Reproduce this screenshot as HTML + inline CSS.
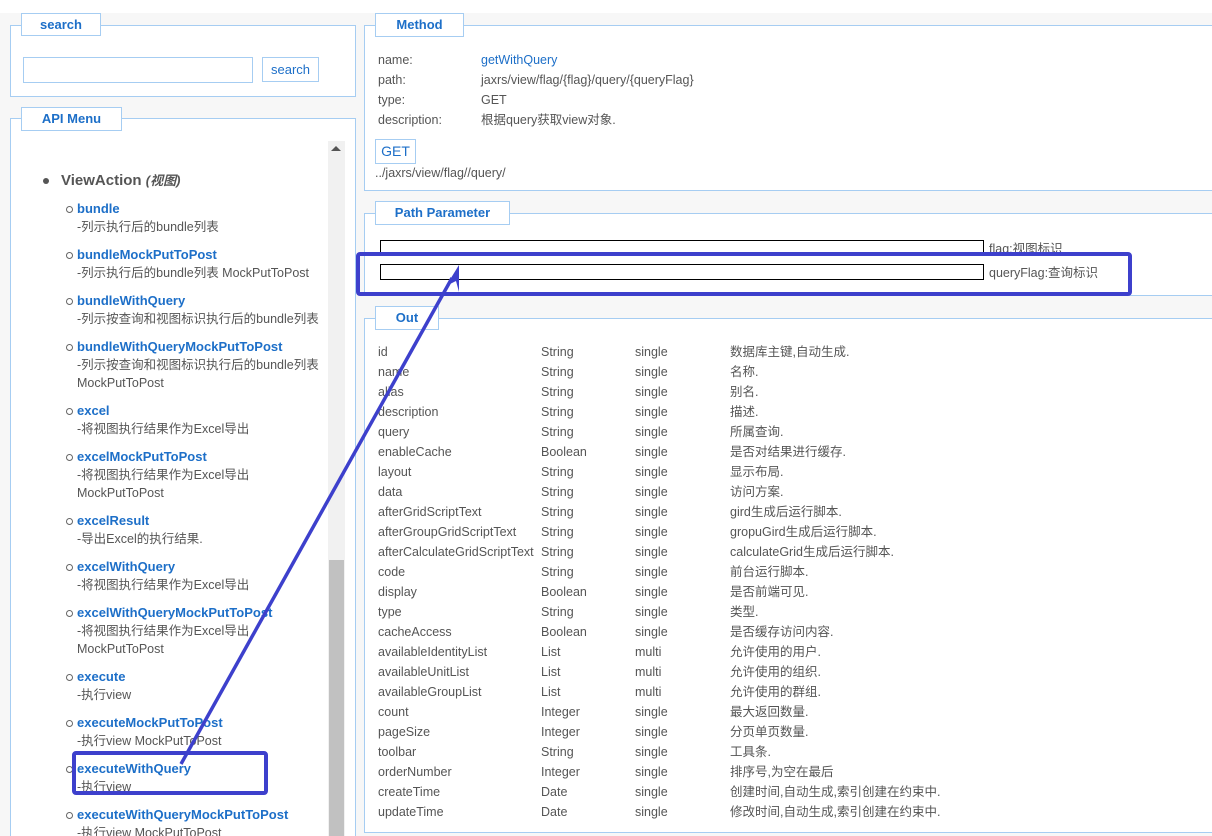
<!DOCTYPE html>
<html><head><meta charset="utf-8"><style>
*{margin:0;padding:0;box-sizing:border-box}
html,body{overflow:hidden;height:836px}
body{width:1212px;height:836px;background:#f7f7f7;font-family:"Liberation Sans","Noto Sans CJK SC",sans-serif;font-size:12.5px;color:#555;position:relative}
.a{position:absolute}
.panel{position:absolute;background:#fff;border:1px solid #a6cdf2}
.leg{position:absolute;background:#fff;border:1px solid #a6cdf2;color:#1d6fc8;font-weight:bold;font-size:13px;text-align:center;line-height:21px}
.lnk{color:#1d6fc8;font-weight:bold;font-size:13px}
.item{position:absolute;left:77px;line-height:18px;font-size:12.5px;width:250px}
.item:before{content:"";position:absolute;left:-11px;top:6px;width:5px;height:5px;border:1px solid #666;border-radius:50%}
.row{position:absolute;left:378px;height:20px;line-height:20px;font-size:12.5px;white-space:nowrap}
.row span{position:absolute}
</style></head><body>
<div class="a" style="left:0;top:0;width:1212px;height:13px;background:#fff"></div>
<!-- search -->
<div class="panel" style="left:10px;top:25px;width:346px;height:72px"></div>
<div class="leg" style="left:21px;top:13px;width:80px;height:23px">search</div>
<div class="a" style="left:23px;top:57px;width:230px;height:26px;border:1px solid #a6cdf2;background:#fff"></div>
<div class="a" style="left:262px;top:57px;width:57px;height:25px;border:1px solid #a6cdf2;color:#1d6fc8;font-size:13px;text-align:center;line-height:23px">search</div>
<!-- API menu -->
<div class="panel" style="left:10px;top:118px;width:346px;height:718px;border-bottom:none"></div>
<div class="leg" style="left:21px;top:107px;width:101px;height:24px">API Menu</div>
<div class="a" style="left:328px;top:141px;width:17px;height:695px;background:#f1f1f1"></div>
<div class="a" style="left:331px;top:146px;width:0;height:0;border-left:5px solid transparent;border-right:5px solid transparent;border-bottom:5px solid #555"></div>
<div class="a" style="left:329px;top:560px;width:15px;height:276px;background:#c1c1c1"></div>
<div class="a" style="left:43px;top:178px;width:6px;height:6px;border-radius:50%;background:#555"></div>
<div class="a" style="left:61px;top:171px;font-size:15px;font-weight:bold;color:#555;line-height:20px">ViewAction <i style="font-size:13px">(视图)</i></div>

<div class="item" style="top:200px"><span class="lnk">bundle</span><br>-列示执行后的bundle列表</div>
<div class="item" style="top:246px"><span class="lnk">bundleMockPutToPost</span><br>-列示执行后的bundle列表 MockPutToPost</div>
<div class="item" style="top:292px"><span class="lnk">bundleWithQuery</span><br>-列示按查询和视图标识执行后的bundle列表</div>
<div class="item" style="top:338px"><span class="lnk">bundleWithQueryMockPutToPost</span><br>-列示按查询和视图标识执行后的bundle列表<br>MockPutToPost</div>
<div class="item" style="top:402px"><span class="lnk">excel</span><br>-将视图执行结果作为Excel导出</div>
<div class="item" style="top:448px"><span class="lnk">excelMockPutToPost</span><br>-将视图执行结果作为Excel导出<br>MockPutToPost</div>
<div class="item" style="top:512px"><span class="lnk">excelResult</span><br>-导出Excel的执行结果.</div>
<div class="item" style="top:558px"><span class="lnk">excelWithQuery</span><br>-将视图执行结果作为Excel导出</div>
<div class="item" style="top:604px"><span class="lnk">excelWithQueryMockPutToPost</span><br>-将视图执行结果作为Excel导出<br>MockPutToPost</div>
<div class="item" style="top:668px"><span class="lnk">execute</span><br>-执行view</div>
<div class="item" style="top:714px"><span class="lnk">executeMockPutToPost</span><br>-执行view MockPutToPost</div>
<div class="item" style="top:760px"><span class="lnk">executeWithQuery</span><br>-执行view</div>
<div class="item" style="top:806px;height:30px"><span class="lnk">executeWithQueryMockPutToPost</span><br>-执行view MockPutToPost</div>

<!-- Method -->
<div class="panel" style="left:364px;top:25px;width:848px;height:166px;border-right:none"></div>
<div class="leg" style="left:375px;top:13px;width:89px;height:24px">Method</div>
<div class="a" style="left:378px;top:50px;line-height:20px">name:<br>path:<br>type:<br>description:</div>
<div class="a" style="left:481px;top:50px;line-height:20px"><span style="color:#1d6fc8">getWithQuery</span><br>jaxrs/view/flag/{flag}/query/{queryFlag}<br>GET<br>根据query获取view对象.</div>
<div class="a" style="left:375px;top:139px;width:41px;height:25px;border:1px solid #a6cdf2;color:#1d6fc8;font-size:14px;text-align:center;line-height:23px">GET</div>
<div class="a" style="left:375px;top:164px;line-height:18px">../jaxrs/view/flag//query/</div>

<!-- Path Parameter -->
<div class="panel" style="left:364px;top:213px;width:848px;height:83px;border-right:none"></div>
<div class="leg" style="left:375px;top:201px;width:135px;height:24px">Path Parameter</div>
<div class="a" style="left:380px;top:240px;width:604px;height:16px;border:1px solid #000;background:#fff"></div>
<div class="a" style="left:989px;top:240px;line-height:18px">flag:视图标识</div>
<div class="a" style="left:380px;top:264px;width:604px;height:16px;border:1px solid #000;background:#fff"></div>
<div class="a" style="left:989px;top:264px;line-height:18px">queryFlag:查询标识</div>

<!-- Out -->
<div class="panel" style="left:364px;top:318px;width:848px;height:515px;border-right:none"></div>
<div class="leg" style="left:375px;top:306px;width:64px;height:24px">Out</div>
<div id="rows"></div>
<script>
var d=[["id","String","single","数据库主键,自动生成."],["name","String","single","名称."],["alias","String","single","别名."],["description","String","single","描述."],["query","String","single","所属查询."],["enableCache","Boolean","single","是否对结果进行缓存."],["layout","String","single","显示布局."],["data","String","single","访问方案."],["afterGridScriptText","String","single","gird生成后运行脚本."],["afterGroupGridScriptText","String","single","gropuGird生成后运行脚本."],["afterCalculateGridScriptText","String","single","calculateGrid生成后运行脚本."],["code","String","single","前台运行脚本."],["display","Boolean","single","是否前端可见."],["type","String","single","类型."],["cacheAccess","Boolean","single","是否缓存访问内容."],["availableIdentityList","List","multi","允许使用的用户."],["availableUnitList","List","multi","允许使用的组织."],["availableGroupList","List","multi","允许使用的群组."],["count","Integer","single","最大返回数量."],["pageSize","Integer","single","分页单页数量."],["toolbar","String","single","工具条."],["orderNumber","Integer","single","排序号,为空在最后"],["createTime","Date","single","创建时间,自动生成,索引创建在约束中."],["updateTime","Date","single","修改时间,自动生成,索引创建在约束中."]];
var h="";d.forEach(function(r,i){h+='<div class="row" style="top:'+(342+i*20)+'px"><span style="left:0">'+r[0]+'</span><span style="left:163px">'+r[1]+'</span><span style="left:257px">'+r[2]+'</span><span style="left:352px">'+r[3]+'</span></div>';});
document.getElementById("rows").innerHTML=h;
</script>

<!-- annotations -->
<svg class="a" style="left:0;top:0" width="1212" height="836">
<rect x="358" y="254" width="772" height="40" rx="2" fill="none" stroke="#3d40cc" stroke-width="4"/>
<rect x="74" y="753" width="192" height="40" rx="2" fill="none" stroke="#3d40cc" stroke-width="4"/>
<line x1="181" y1="764" x2="452" y2="278" stroke="#3d40cc" stroke-width="3.5"/>
<polygon points="459,265 446,286 456,281 459,292" fill="#3d40cc"/>
</svg>
</body></html>
